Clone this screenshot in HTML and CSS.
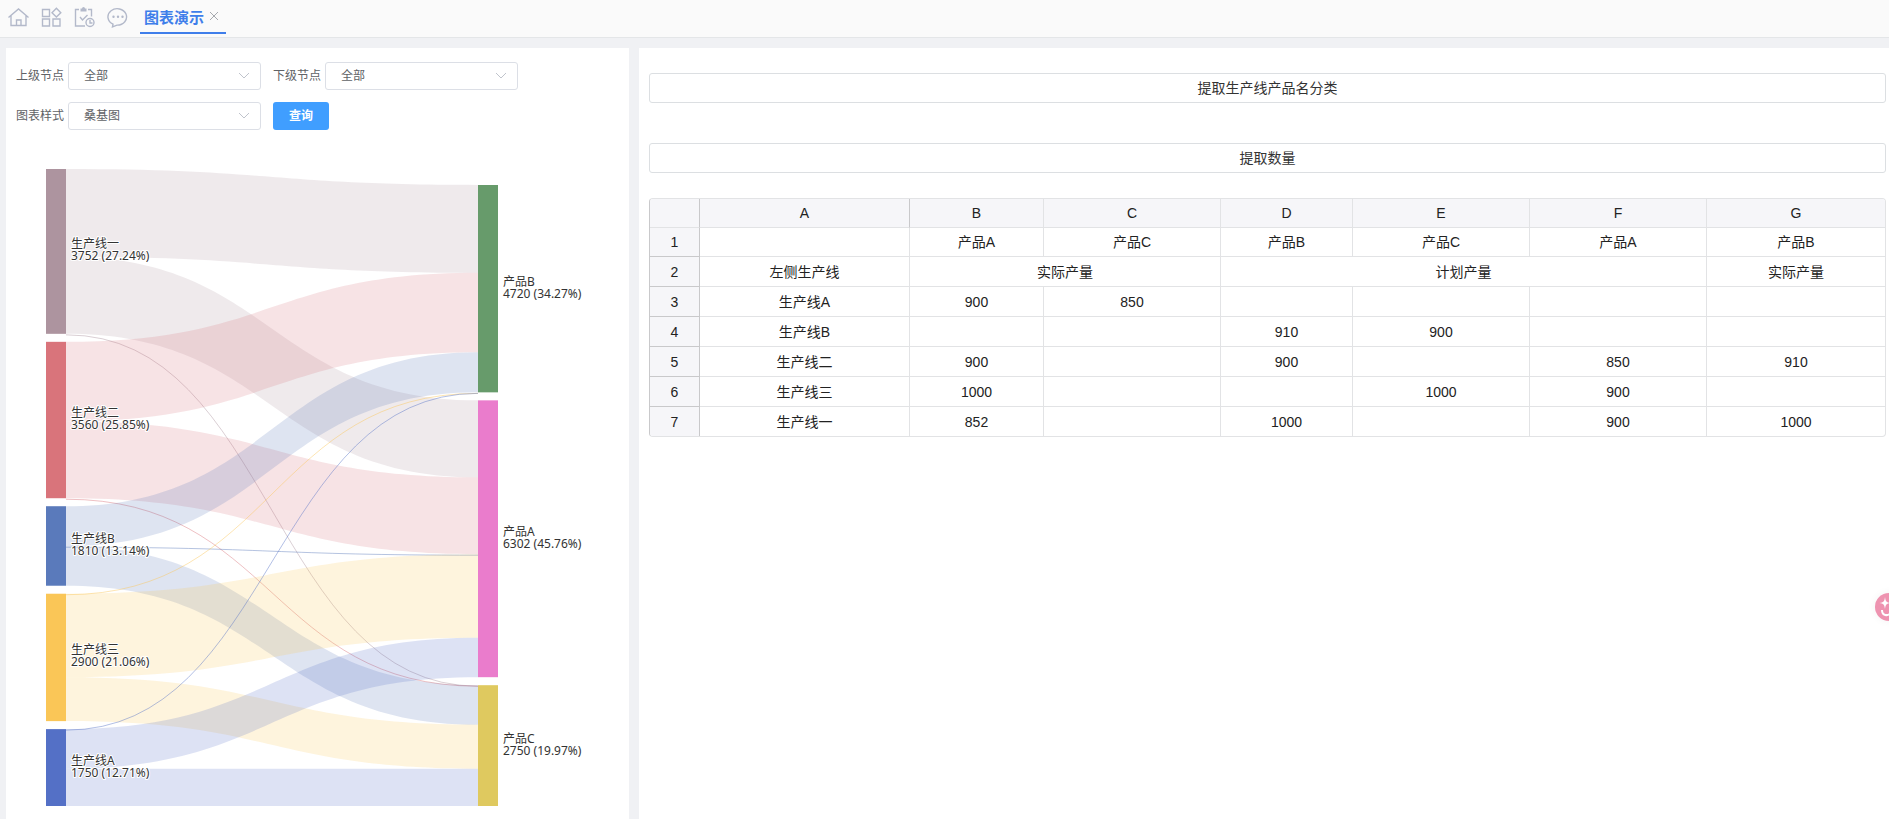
FILE: index.html
```html
<!DOCTYPE html>
<html lang="zh-CN">
<head>
    <meta charset="UTF-8">
    <meta name="viewport" content="width=device-width, initial-scale=1.0">
    <title>图表演示</title>
    <link rel="stylesheet" href="styles.css">
</head>
<body>
    <header class="topbar">
        <nav class="shortcuts">
            <a href="#" class="shortcut" aria-label="首页">
                <svg viewBox="0 0 22 22"><path d="M1.500 11.500 11.500 3l10 8.500M4 9.500V19.500h15V9.500M9.500 19.500v-5.500h4.500v5.500"/></svg>
            </a>
            <a href="#" class="shortcut" aria-label="应用">
                <svg viewBox="0 0 22 22"><path d="M2.500 3.500h7v7h-7zM2.500 13h7v7h-7zM13 13h7v7h-7zM16.400 2.300l4.400 4.400-4.400 4.400-4.400-4.400z"/></svg>
            </a>
            <a href="#" class="shortcut" aria-label="任务">
                <svg viewBox="0 0 22 22"><path d="M6 3.500H2.500V20h9.500M15 3.500h3.500V10.500M7 11l2.500 3 5-5M17 14v3h2.500"/><circle cx="17" cy="16.500" r="4"/><path class="solid" d="M7.500 2.500H9a1.500 1.500 0 0 1 3 0h1.500V5.500h-6z"/></svg>
            </a>
            <a href="#" class="shortcut" aria-label="消息">
                <svg viewBox="0 0 22 22"><path d="M7 18.200A9.300 8.200 0 1 1 11 19.100L6.500 20.800z"/><path class="dots" d="M7.500 10.800h.01M12 10.800h.01M16.500 10.800h.01"/></svg>
            </a>
        </nav>
        <div class="tab active">
            <a href="#" class="tab-title">图表演示</a>
            <button type="button" class="tab-close" aria-label="关闭">
                <svg viewBox="0 0 10 10"><path d="M1 1l8 8M9 1l-8 8"/></svg>
            </button>
        </div>
    </header>

    <main class="content">
        <section class="panel chart-panel">
            <form class="filters" id="filterForm">
                <div class="field">
                    <label for="parentNode">上级节点</label>
                    <div class="select-box">
                        <select id="parentNode"><option>全部</option></select>
                        <svg class="arrow" viewBox="0 0 12 8"><path d="M1 1l5 5 5-5"/></svg>
                    </div>
                </div>
                <div class="field">
                    <label for="childNode">下级节点</label>
                    <div class="select-box">
                        <select id="childNode"><option>全部</option></select>
                        <svg class="arrow" viewBox="0 0 12 8"><path d="M1 1l5 5 5-5"/></svg>
                    </div>
                </div>
                <div class="field">
                    <label for="chartType">图表样式</label>
                    <div class="select-box">
                        <select id="chartType"><option>桑基图</option></select>
                        <svg class="arrow" viewBox="0 0 12 8"><path d="M1 1l5 5 5-5"/></svg>
                    </div>
                </div>
                <button type="submit" class="query-button">查询</button>
            </form>
            <svg class="chart" id="chart" role="img" aria-label="桑基图"></svg>
        </section>

        <section class="panel sheet-panel">
            <button type="button" class="wide-button">提取生产线产品名分类</button>
            <button type="button" class="wide-button">提取数量</button>

            <div class="sheet-box">
                <table class="sheet">
                    <colgroup>
                        <col class="col-index"><col class="col-name"><col class="col-b"><col class="col-c"><col class="col-d"><col class="col-c"><col class="col-c"><col class="col-g">
                    </colgroup>
                    <thead>
                        <tr><th></th><th class="strong">A</th><th>B</th><th>C</th><th>D</th><th>E</th><th>F</th><th>G</th></tr>
                    </thead>
                    <tbody>
                        <tr class="first"><th>1</th><td></td><td>产品A</td><td>产品C</td><td>产品B</td><td>产品C</td><td>产品A</td><td>产品B</td></tr>
                        <tr><th>2</th><td>左侧生产线</td><td colspan="2">实际产量</td><td colspan="3">计划产量</td><td>实际产量</td></tr>
                        <tr><th>3</th><td>生产线A</td><td>900</td><td>850</td><td></td><td></td><td></td><td></td></tr>
                        <tr><th>4</th><td>生产线B</td><td></td><td></td><td>910</td><td>900</td><td></td><td></td></tr>
                        <tr><th>5</th><td>生产线二</td><td>900</td><td></td><td>900</td><td></td><td>850</td><td>910</td></tr>
                        <tr><th>6</th><td>生产线三</td><td>1000</td><td></td><td></td><td>1000</td><td>900</td><td></td></tr>
                        <tr><th>7</th><td>生产线一</td><td>852</td><td></td><td>1000</td><td></td><td>900</td><td>1000</td></tr>
                    </tbody>
                </table>
            </div>
        </section>
    </main>

    <button type="button" class="assistant" aria-label="助手">
        <svg viewBox="0 0 28 28"><path d="M10 4c.6 4.500 1.400 5.400 5.500 6-4.100.6-4.900 1.500-5.500 6-.6-4.500-1.400-5.400-5.500-6 4.100-.6 4.900-1.500 5.500-6z"/><path class="smile" d="M7 17c0 6 6 6 8 3.500"/></svg>
    </button>

    <script src="chart.js"></script>
</body>
</html>
```
FILE: styles.css
```css
* {
    margin: 0;
    padding: 0;
    box-sizing: border-box;
}

body {
    font-family: "Liberation Sans", "Noto Sans CJK SC", sans-serif;
    font-size: 12px;
    color: #606266;
    background: #f0f1f4;
    min-height: 100vh;
    display: flex;
    flex-direction: column;
}

button,
select {
    font: inherit;
    color: inherit;
}

a {
    color: inherit;
    text-decoration: none;
}

/* 顶部标签栏 */
.topbar {
    display: flex;
    align-items: flex-start;
    height: 38px;
    padding-left: 7px;
    background: #fafafa;
    border-bottom: 1px solid #e4e6e8;
}

.shortcuts {
    display: flex;
    gap: 11px;
    padding: 6px 12px 0 0;
}

.shortcut {
    width: 22px;
    height: 22px;
}

.shortcut svg {
    display: block;
    width: 22px;
    height: 22px;
    fill: none;
    stroke: #b3b9ca;
    stroke-width: 1.4;
}

.shortcut .solid {
    fill: #b3b9ca;
    stroke: none;
}

.shortcut .dots {
    stroke-width: 2.4;
    stroke-linecap: round;
}

.tab {
    display: flex;
    align-items: center;
    height: 34px;
    padding: 0 7px 0 4px;
    border-bottom: 2px solid #3f7eea;
}

.tab-title {
    color: #3f7eea;
    font-size: 15px;
    font-weight: bold;
}

.tab-close {
    width: 10px;
    height: 10px;
    margin-left: 5px;
    background: none;
    border: none;
    cursor: pointer;
}

.tab-close svg {
    display: block;
    stroke: #a6a9ae;
}

.content {
    flex: 1;
    display: flex;
    gap: 10px;
    padding-top: 10px;
}

.panel {
    background: #fff;
}

/* 左侧图表 */
.chart-panel {
    width: 33%;
    margin-left: 6px;
    padding: 14px 0 0 10px;
}

.filters {
    display: flex;
    flex-wrap: wrap;
    gap: 12px;
    max-width: 520px;
}

.field {
    display: flex;
    align-items: center;
    gap: 4px;
}

.field label {
    line-height: 16px;
}

.select-box {
    position: relative;
}

.select-box select {
    display: block;
    width: 193px;
    height: 28px;
    padding: 0 30px 0 15px;
    appearance: none;
    background: #fff;
    border: 1px solid #dcdfe6;
    border-radius: 3px;
}

.select-box .arrow {
    position: absolute;
    right: 11px;
    top: 10px;
    width: 12px;
    height: 8px;
    fill: none;
    stroke: #c0c4cc;
    pointer-events: none;
}

.query-button {
    width: 56px;
    height: 28px;
    background: #409eff;
    color: #fff;
    font-weight: bold;
    line-height: 16px;
    border: none;
    border-radius: 3px;
    cursor: pointer;
}

.chart {
    display: block;
    width: 100%;
    height: 686px;
    font-family: "Noto Sans", "Noto Sans CJK SC", sans-serif;
    font-size: 12px;
    fill: #333;
}

.chart .halo {
    stroke: #fff;
    stroke-width: 2px;
    stroke-linejoin: round;
    paint-order: stroke;
}

/* 右侧表格 */
.sheet-panel {
    flex: 1;
    padding: 25px 3px 0 10px;
}

.wide-button {
    display: block;
    width: 100%;
    height: 30px;
    margin-bottom: 40px;
    background: #fff;
    color: #333;
    font-size: 14px;
    line-height: 18px;
    border: 1px solid #dcdfe2;
    border-radius: 3px;
    cursor: pointer;
}

.wide-button + .wide-button {
    margin-bottom: 25px;
}

.sheet-box {
    border: 1px solid #e2e3e5;
    border-left-color: #c9c9cb;
    border-radius: 4px;
    overflow: hidden;
}

.sheet {
    width: 100%;
    table-layout: fixed;
    border-collapse: separate;
    border-spacing: 0;
    color: #222;
    font-size: 14px;
    text-align: center;
}

.col-index { width: 50px; }
.col-name { width: 210px; }
.col-b { width: 134px; }
.col-c { width: 177px; }
.col-d { width: 132px; }
.col-g { width: 178px; }

.sheet th,
.sheet td {
    height: 30px;
    line-height: 20px;
    border-right: 1px solid #e2e3e5;
    border-bottom: 1px solid #e2e3e5;
}

.sheet th {
    background: #f6f6f9;
    font-weight: normal;
}

.sheet thead th,
.sheet .first th,
.sheet .first td {
    height: 29px;
}

.sheet tbody th,
.sheet thead th:first-child,
.sheet th.strong {
    border-right-color: #c9c9cb;
}

.sheet tbody th {
    border-bottom-color: #c9c9cb;
}

.sheet tr > :last-child {
    border-right: none;
}

.sheet tbody tr:last-child > * {
    height: 29px;
    border-bottom: none;
}

/* 悬浮按钮 */
.assistant {
    position: fixed;
    right: -14px;
    top: 593px;
    width: 28px;
    height: 28px;
    background: #ee93b0;
    border: none;
    border-radius: 50%;
    box-shadow: 0 0 8px rgba(0, 0, 0, 0.05);
    cursor: pointer;
}

.assistant svg {
    display: block;
    fill: #fff;
}

.assistant .smile {
    fill: none;
    stroke: #fff;
    stroke-width: 2;
}
```
FILE: chart.js
```js
const chart = document.getElementById('chart');

const sources = [
    { name: '生产线一', color: '#ad949f' },
    { name: '生产线二', color: '#d9747b' },
    { name: '生产线B', color: '#5a7abb' },
    { name: '生产线三', color: '#fac657' },
    { name: '生产线A', color: '#5470c6' }
];
const targets = [
    { name: '产品B', color: '#679b6b' },
    { name: '产品A', color: '#ea7ccc' },
    { name: '产品C', color: '#dfc95f' }
];
// 行: 生产线, 列: 产品
const links = [
    [2000, 1752, 0],
    [1810, 1750, 0],
    [910, 0, 900],
    [0, 1900, 1000],
    [0, 900, 850]
];

const margin = { top: 39, right: 131, bottom: 10, left: 30 };
const nodeWidth = 20;
const nodeGap = 8;

function add(tag, attrs, text) {
    const el = document.createElementNS('http://www.w3.org/2000/svg', tag);
    for (const key in attrs) el.setAttribute(key, attrs[key]);
    if (text) el.textContent = text;
    chart.appendChild(el);
}

function place(nodes, bottom, scale) {
    const height = nodes.reduce((sum, n) => sum + n.value * scale, 0) + nodeGap * (nodes.length - 1);
    let y = bottom - height;
    nodes.forEach(n => {
        n.y = n.next = y;
        n.h = n.value * scale;
        y += n.h + nodeGap;
    });
}

function drawNode(node, x, total, halo) {
    add('rect', { x: x, y: node.y, width: nodeWidth, height: node.h, fill: node.color });
    const middle = node.y + node.h / 2;
    const percent = (node.value / total * 100).toFixed(2);
    const cls = halo ? 'halo' : '';
    add('text', { x: x + nodeWidth + 5, y: middle - 3, class: cls }, node.name);
    add('text', { x: x + nodeWidth + 5, y: middle + 9, class: cls }, `${node.value} (${percent}%)`);
}

function render() {
    chart.textContent = '';
    const left = margin.left;
    const right = Math.round(chart.clientWidth) - margin.right - nodeWidth;
    const bottom = chart.clientHeight - margin.bottom;

    sources.forEach((s, i) => s.value = links[i].reduce((a, b) => a + b, 0));
    targets.forEach((t, j) => t.value = links.reduce((a, row) => a + row[j], 0));
    const total = sources.reduce((a, s) => a + s.value, 0);
    const scale = (bottom - margin.top - nodeGap * (sources.length - 1)) / total;
    place(sources, bottom, scale);
    place(targets, bottom, scale);

    const x1 = left + nodeWidth;
    const mid = (x1 + right) / 2;
    sources.forEach((s, i) => {
        targets.forEach((t, j) => {
            const h = links[i][j] * scale;
            const y1 = s.next;
            const y2 = t.next;
            s.next += h;
            t.next += h;
            if (h) {
                add('path', {
                    d: `M${x1} ${y1}C${mid} ${y1} ${mid} ${y2} ${right} ${y2}v${h}C${mid} ${y2 + h} ${mid} ${y1 + h} ${x1} ${y1 + h}z`,
                    fill: s.color,
                    'fill-opacity': 0.2
                });
            } else {
                // 数值为 0 时只画一条细线
                add('path', {
                    d: `M${x1} ${y1 + 1}C${mid} ${y1 + 1} ${mid} ${y2 + 1} ${right} ${y2 + 1}`,
                    fill: 'none',
                    stroke: s.color,
                    'stroke-opacity': 0.45
                });
            }
        });
    });

    sources.forEach(s => drawNode(s, left, total, true));
    targets.forEach(t => drawNode(t, right, total, false));
}

document.getElementById('filterForm').addEventListener('submit', e => {
    e.preventDefault();
    render();
});
window.addEventListener('resize', render);
render();
```
